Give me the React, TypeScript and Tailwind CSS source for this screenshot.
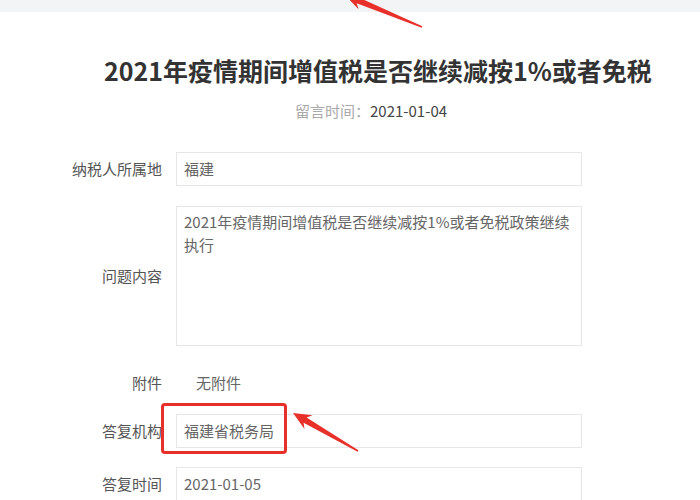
import React from "react";

const FONT = "font-['Noto_Sans_CJK_SC','Noto_Sans',sans-serif]";

type RowProps = {
  label: string;
  children: React.ReactNode;
  className?: string;
};

function Row({ label, children, className = "" }: RowProps) {
  return (
    <div className={`flex items-center ${className}`}>
      <div className="w-[162px] shrink-0 text-right text-[15px] text-[#555] whitespace-nowrap">{label}</div>
      <div className="ml-[14px] w-[406px]">{children}</div>
    </div>
  );
}

function Field({ value }: { value: string }) {
  return (
    <div className="h-[34px] border border-[#e6e6e6] bg-white px-[7px] flex items-center text-[15px] text-[#666]">
      {value}
    </div>
  );
}

export default function App() {
  return (
    <div className={`relative w-[700px] h-[500px] overflow-hidden bg-white ${FONT}`}>
      <div className="h-[12px] bg-[#f3f4f6]" />

      <h1 className="mt-[40px] pl-[104px] text-[25px] leading-[36px] font-bold text-[#333] whitespace-nowrap">
        2021年疫情期间增值税是否继续减按1%或者免税
      </h1>
      <p className="mt-[13px] pl-[295px] text-[15px] leading-[20px]">
        <span className="text-[#aaa]">留言时间：</span>
        <span className="text-[#444]">2021-01-04</span>
      </p>

      <div className="mt-[31px]">
        <Row label="纳税人所属地">
          <Field value="福建" />
        </Row>

        <Row label="问题内容" className="mt-[20px]">
          <div className="h-[140px] border border-[#e6e6e6] bg-white px-[7px] py-[3px] text-[15px] leading-[23px] text-[#666]">
            2021年疫情期间增值税是否继续减按1%或者免税政策继续执行
          </div>
        </Row>

        <Row label="附件" className="mt-[20px] h-[34px]">
          <div className="pl-[20px] text-[15px] text-[#666]">无附件</div>
        </Row>

        <Row label="答复机构" className="mt-[14px]">
          <Field value="福建省税务局" />
        </Row>

        <Row label="答复时间" className="mt-[19px]">
          <Field value="2021-01-05" />
        </Row>
      </div>

      {/* annotation: red highlight box */}
      <div className="absolute left-[161px] top-[403px] w-[126px] h-[51px] border-[3px] border-[#e8302a] rounded-[4px]" />

      {/* annotation arrows */}
      <svg className="absolute left-0 top-0 pointer-events-none" width="700" height="500" viewBox="0 0 700 500">
        <polygon
          fill="#e8302a"
          points="345,-5 364.7,-5.5 359.1,-2.4 422.3,26.3 421.7,27.7 356.7,3.2 358.5,9.3"
        />
        <polygon
          fill="#e8302a"
          points="293,413 312.5,415.2 306.6,417.5 358.4,450.3 357.6,451.7 303.6,422.7 304.5,429"
        />
      </svg>
    </div>
  );
}
